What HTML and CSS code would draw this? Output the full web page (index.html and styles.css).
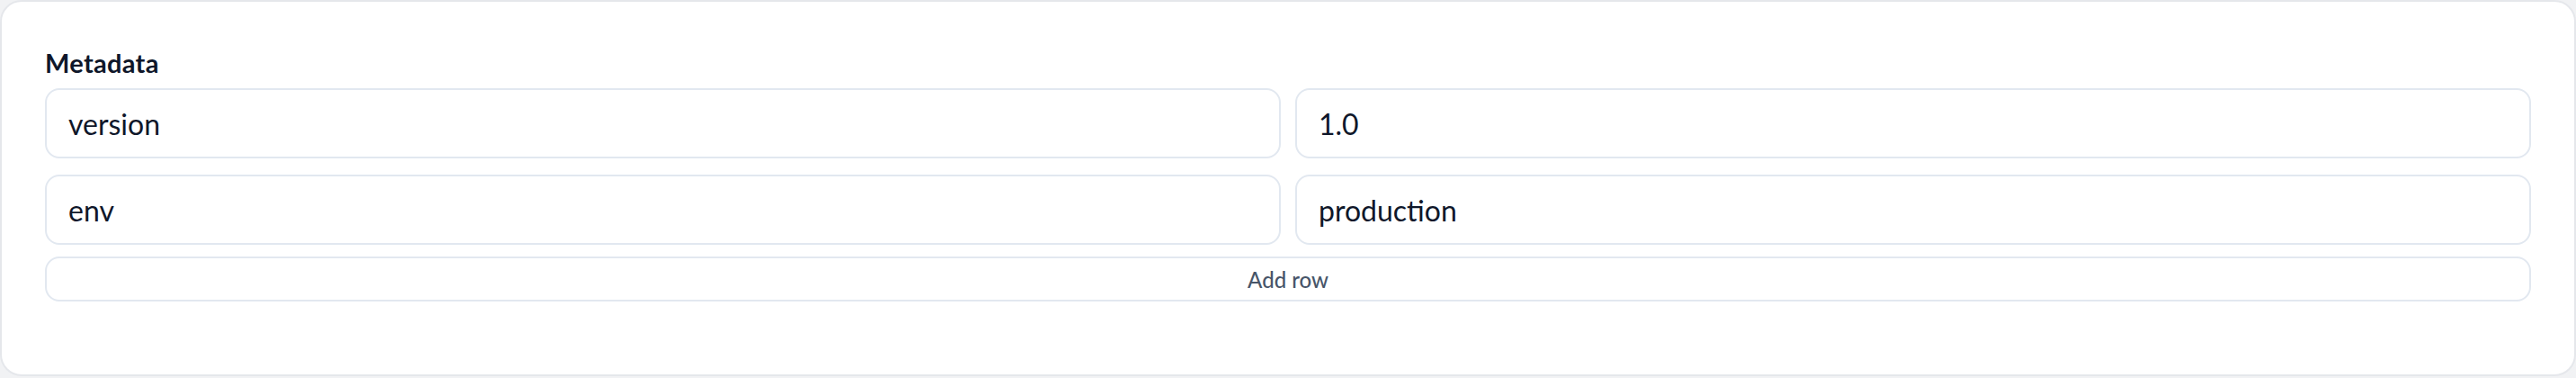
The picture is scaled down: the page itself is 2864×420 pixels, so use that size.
FILE: index.html
```html
<!DOCTYPE html>
<html lang="en">
<head>
<meta charset="utf-8">
<title>Metadata</title>
<link rel="stylesheet" href="styles.css">
</head>
<body>
  <section class="card">
    <h2 class="title">Metadata</h2>
    <div class="rows">
      <div class="row">
        <input class="field" type="text" value="version">
        <input class="field" type="text" value="1.0">
      </div>
      <div class="row">
        <input class="field" type="text" value="env">
        <input class="field" type="text" value="production">
      </div>
    </div>
    <button class="add-btn" type="button">Add row</button>
  </section>
</body>
</html>
```

FILE: styles.css
```css
* { box-sizing: border-box; }

html, body {
  margin: 0;
  padding: 0;
  background: #f1f2f4;
}

body {
  font-family: "Lato", "Inter", "Liberation Sans", sans-serif;
  color: #0f172a;
}

.card {
  width: 2864px;
  height: 418px;
  background: #ffffff;
  border: 2px solid #e5e7eb;
  border-radius: 24px;
  padding: 48px 48px 0 48px;
  display: flex;
  flex-direction: column;
}

.title {
  margin: 0 0 8px 0;
  font-size: 29px;
  line-height: 40px;
  font-weight: 700;
  letter-spacing: 0.3px;
  color: #0f172a;
}

.rows {
  display: flex;
  flex-direction: column;
  gap: 18px;
}

.row {
  display: grid;
  grid-template-columns: 1fr 1fr;
  gap: 16px;
}

.field {
  height: 78px;
  width: 100%;
  border: 2px solid #e2e8f0;
  border-radius: 16px;
  background: #ffffff;
  padding: 0 24px;
  font-family: inherit;
  font-size: 32px;
  color: #0f172a;
  outline: none;
}

.add-btn {
  margin-top: 13px;
  height: 50px;
  width: 100%;
  border: 2px solid #e2e8f0;
  border-radius: 16px;
  background: #ffffff;
  font-family: inherit;
  font-size: 24px;
  font-weight: 500;
  color: #475569;
  cursor: pointer;
}
```
